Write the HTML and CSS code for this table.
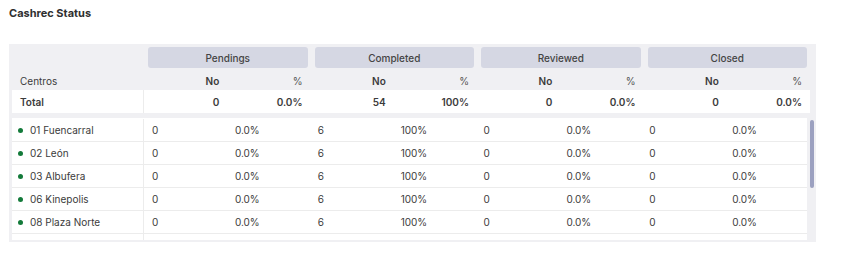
FILE: index.html
```html
<!DOCTYPE html>
<html lang="es">
<head>
<meta charset="utf-8">
<title>Cashrec Status</title>
<link rel="stylesheet" href="styles.css">
</head>
<body>
<div class="page">
  <h2 class="title">Cashrec Status</h2>
  <div class="panel">
    <div class="groups">
      <div></div>
      <div class="group"><span>Pendings</span></div>
      <div class="group"><span>Completed</span></div>
      <div class="group"><span>Reviewed</span></div>
      <div class="group"><span>Closed</span></div>
    </div>
    <div class="grid subhead">
      <div class="name">Centros</div>
      <div class="num strong">No</div><div class="num">%</div>
      <div class="num strong">No</div><div class="num">%</div>
      <div class="num strong">No</div><div class="num">%</div>
      <div class="num strong">No</div><div class="num">%</div>
    </div>
    <div class="grid total">
      <div class="name">Total</div>
      <div class="num">0</div><div class="num">0.0%</div>
      <div class="num">54</div><div class="num">100%</div>
      <div class="num">0</div><div class="num">0.0%</div>
      <div class="num">0</div><div class="num">0.0%</div>
    </div>
    <div class="body">
      <div class="rows">
        <div class="grid row"><div class="name"><i class="dot"></i>01 Fuencarral</div><div>0</div><div>0.0%</div><div>6</div><div>100%</div><div>0</div><div>0.0%</div><div>0</div><div>0.0%</div></div>
        <div class="grid row"><div class="name"><i class="dot"></i>02 León</div><div>0</div><div>0.0%</div><div>6</div><div>100%</div><div>0</div><div>0.0%</div><div>0</div><div>0.0%</div></div>
        <div class="grid row"><div class="name"><i class="dot"></i>03 Albufera</div><div>0</div><div>0.0%</div><div>6</div><div>100%</div><div>0</div><div>0.0%</div><div>0</div><div>0.0%</div></div>
        <div class="grid row"><div class="name"><i class="dot"></i>06 Kinepolis</div><div>0</div><div>0.0%</div><div>6</div><div>100%</div><div>0</div><div>0.0%</div><div>0</div><div>0.0%</div></div>
        <div class="grid row"><div class="name"><i class="dot"></i>08 Plaza Norte</div><div>0</div><div>0.0%</div><div>6</div><div>100%</div><div>0</div><div>0.0%</div><div>0</div><div>0.0%</div></div>
        <div class="grid row"><div class="name"></div><div></div><div></div><div></div><div></div><div></div><div></div><div></div><div></div></div>
      </div>
      <div class="scrollbar"><div class="thumb"></div></div>
    </div>
  </div>
</div>
</body>
</html>
```

FILE: styles.css
```css
* { box-sizing: border-box; }
html, body { margin: 0; background: #fff; }
body {
  font-family: Inter, "Noto Sans", sans-serif;
  font-size: 10px;
  color: #3b3b3b;
}
.page { padding: 6px 25px 0 9px; }
.title {
  margin: 0 0 24px;
  font-size: 11px;
  line-height: 14px;
  font-weight: 700;
  color: #2f2f2f;
}
.panel {
  background: #f0f0f3;
  padding: 3px 6px 2px 3px;
}
.groups {
  display: grid;
  grid-template-columns: 132px repeat(4, 1fr);
  height: 21px;
}
.group { padding: 0 3px 0 4px; }
.group span {
  display: flex;
  height: 100%;
  align-items: center;
  justify-content: center;
  background: #d5d7e3;
  border-radius: 3px;
  font-weight: 500;
  color: #444;
}
.grid {
  display: grid;
  grid-template-columns: 132px repeat(8, 1fr);
  align-items: center;
}
.num { text-align: right; padding-right: 8px; }
.name { padding-left: 8px; }
.subhead { height: 22px; padding-top: 3px; color: #555; }
.subhead .name { color: #3b3b3b; }
.subhead .strong { font-weight: 600; color: #3b3b3b; }
.total {
  height: 23px;
  background: #fff;
  font-weight: 600;
  align-items: stretch;
}
.total > div { display: flex; align-items: center; justify-content: flex-end; }
.total .name { justify-content: flex-start; border-right: 1px solid #ececec; }
.body {
  display: flex;
  margin: 5px -6px 0 0;
  height: 122px;
}
.rows {
  flex: 1;
  background: #fff;
  overflow: hidden;
  padding-top: 1px;
}
.scrollbar {
  width: 9px;
  padding: 2px 2px 0 3px;
}
.thumb {
  height: 68px;
  background: #9ca1c0;
  border-radius: 2px;
}
.row {
  height: 23px;
  border-bottom: 1px solid #ececec;
  align-items: stretch;
}
.row > div { display: flex; align-items: center; padding-left: 8px; }
.row > .name { padding-left: 6px; border-right: 1px solid #ececec; }
.dot {
  width: 5px;
  height: 5px;
  border-radius: 50%;
  background: #137a3a;
  margin-right: 7px;
}
```
